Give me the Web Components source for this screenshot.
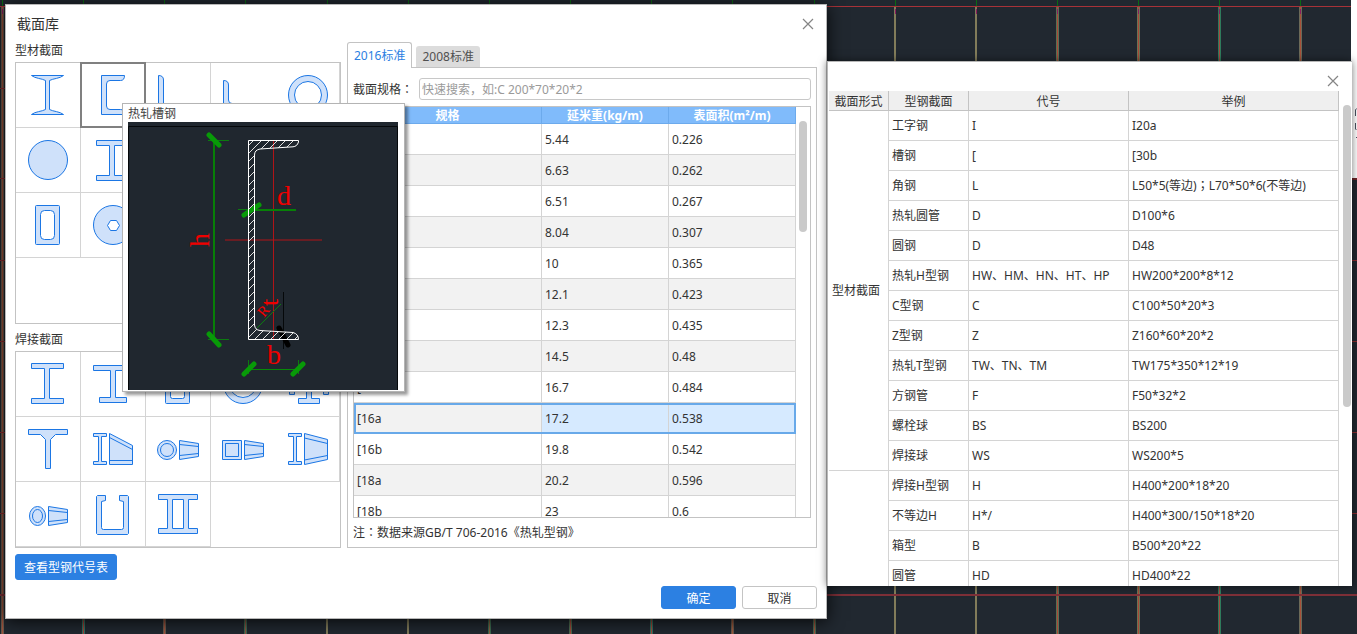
<!DOCTYPE html>
<html lang="zh-CN">
<head>
<meta charset="utf-8">
<meta name="viewport" content="width=device-width, initial-scale=1">
<title>截面库</title>
<style>
html, body { margin: 0; min-height: 100%; }
body {
  font: 12px/16px "Noto Sans", "Noto Sans CJK SC", sans-serif;
  color: #333;
  background: #212830;
}
</style>
</head>
<body>
<cad-desktop>
  <section-dialog></section-dialog>
  <code-window></code-window>
</cad-desktop>

<script>
function mount(el, html) {
  const t = document.createElement('template');
  t.innerHTML = html;
  el.attachShadow({ mode: 'open' }).append(t.content.cloneNode(true));
  return el.shadowRoot;
}

/* Drawing canvas behind the windows, with its axis lines */
customElements.define('cad-desktop', class extends HTMLElement {
  connectedCallback() {
    const palette = [
      ['#6b5a4c', '#a0503c'], ['#2e7060', '#a03c34'], ['#6b5a4c', '#a0503c'], ['#3c6a50', '#8a5040'],
      ['#827c5a', '#827c5a'], ['#827c5a', '#827c5a'], ['#3c6a50', '#8a6040'], ['#4c6a50', '#a04838'],
      ['#2e7060', '#a04838'], ['#6b5a4c', '#a0583c'], ['#4c6a50', '#a0503c'], ['#827c5a', '#827c5a'],
      ['#827c5a', '#827c5a'], ['#5a7054', '#a84838'], ['#6b7456', '#a84838'], ['#2e7a5c', '#a84840'],
      ['#6b6a58', '#a85038']
    ];
    let lines = '';
    for (let i = 0; i < 40; i++) {
      const x = Math.round(2 + 81.15 * i);
      const [side, core] = palette[i % palette.length];
      const w = side === core ? 2 : 3;
      lines += `<rect x="${x - 1}" y="7" width="${w}" height="100%" fill="${side}"/>
        <rect x="${x}" y="7" width="1" height="100%" fill="${core}"/>
        <rect x="${x}" y="0" width="1" height="6" fill="#0b6a14"/>
        <rect x="${x}" y="9" width="1" height="5" fill="#8a1c60"/>`;
    }
    for (const y of [88, 178, 260, 341, 432, 513]) lines += `<rect x="0" y="${y}" width="5" height="1" fill="#8a2c30"/><rect x="99%" y="${y}" width="1%" height="1" fill="#8a2c30"/>`;
    mount(this, `
      <style>
        :host { display: block; position: relative; min-height: 634px; overflow: hidden; background: #212830; }
        svg.canvas { position: absolute; inset: 0; width: 100%; height: 100%; }
        .edge { position: absolute; top: 0; right: 0; width: 6px; height: 178px; background: #fff; border-bottom: 2px solid #6a2428; }
        .edge svg { display: block; }
        .windows { position: relative; display: grid; grid-template-columns: minmax(0, 822fr) minmax(0, 525fr); align-items: start; padding: 4px 5px 15px; }
      </style>
      <svg class="canvas" aria-hidden="true">${lines}
        <rect x="0" y="6" width="100%" height="1" fill="#a83238"/>
        <rect x="0" y="594" width="100%" height="2" fill="#7e3038"/>
      </svg>
      <div class="edge"><svg width="6" height="150" aria-hidden="true"><path d="M4.5 116v-6l1-1.500M4.500 123v6l1 1M5 137.500h1" fill="none" stroke="#4a5060"/></svg></div>
      <div class="windows"><slot></slot></div>`);
  }
});

/* Small pictograms of steel sections */
const I = (l, r, t, b, w1, w2, f) =>
  `<path d="M${l} ${t}H${r}V${t + f}H${w2}V${b - f}H${r}V${b}H${l}V${b - f}H${w1}V${t + f}H${l}Z"/>`;
const ring = '<circle cx="32" cy="32" r="19.500"/><circle class="hole" cx="32" cy="32" r="13.500"/>';
const taper = (x, y) =>
  `<path d="M${x} ${y}l19 3v13l-19 3zM${x} ${y + 4}l19 2M${x} ${y + 15}l19 -2"/>`;
const ICONS = {
  beam: '<path d="M15.500 12.500H47.500C44 15.500 37 15.500 33.500 17.500V46.500C37 48.500 44 48.500 47.500 51.500H15.500C19 48.500 26 48.500 29.500 46.500V17.500C26 15.500 19 15.500 15.500 12.500Z"/>',
  channel: '<path d="M20.500 12.500H43.500Q43.500 17.500 39.500 17.500H29Q25.500 17.500 25.500 21V43Q25.500 46.500 29 46.500H39.500Q43.500 46.500 43.500 51.500H20.500Z"/>',
  angle: '<path d="M12.500 12.500Q17.500 12.500 17.500 17V43Q17.500 46.500 21 46.500H47Q51.500 46.500 51.500 51.500H12.500Z"/>',
  angle2: '<path d="M12.500 17.500Q17.500 17.500 17.500 22V37Q17.500 40.500 21 40.500H47Q51.500 40.500 51.500 45.500H12.500Z"/>',
  pipe: ring,
  round: '<circle cx="32" cy="32" r="19.500"/>',
  h: I(15.5, 47.5, 12.5, 52.5, 28.5, 33.5, 5),
  c: '<path d="M18.500 12.500H45.500V22.500H40.500V17.500H23.500V46.500H40.500V41.500H45.500V51.500H18.500Z"/>',
  z: '<path d="M12.500 12.500H34.500V46.500H51.500V51.500H29.500V17.500H12.500Z"/>',
  t: '<path d="M12.500 12.500H51.500V17.500H34.500V51.500H29.500V17.500H12.500Z"/>',
  tube: '<rect x="19.500" y="12.500" width="24" height="39" rx="1"/><rect class="hole" x="24.500" y="17.500" width="14" height="29" rx="4"/>',
  ball: '<circle cx="32" cy="32" r="19.500"/><path class="hole" d="M26.500 32.500L29.500 27.500H35.500L38.500 32.500L35.500 37.500H29.500Z"/>',
  wh: I(15.5, 47.5, 11.5, 51.5, 28.5, 33.5, 5),
  uh: '<path d="M12.500 13.500H51.500V18.500H34.500V45.500H45.500V50.500H18.500V45.500H29.500V18.500H12.500Z"/>',
  box: '<rect x="19.500" y="11.500" width="24" height="40" rx="1"/><rect class="hole" x="24.500" y="16.500" width="14" height="30" rx="2"/>',
  cross: '<path d="M22.500 12.500H43.500V17.500H35.500V29.500H47.500V21.500H52.500V42.500H47.500V34.500H35.500V46.500H43.500V51.500H22.500V46.500H30.500V34.500H18.500V42.500H13.500V21.500H18.500V29.500H30.500V17.500H22.500Z"/>',
  wt: '<path d="M12.500 12.500H51.500V17.500H39.500L34.500 22.500V51.500H29.500V22.500L24.500 17.500H12.500Z"/>',
  varh: I(12.5, 25.5, 16.5, 47.5, 17.5, 20.5, 3) + '<path d="M28.500 16.500L51.500 28.500V47.500H28.500ZM28.500 20.500L51.500 32.500M28.500 43.500H51.500"/>',
  varpipe: '<circle cx="21" cy="33" r="9.500"/><circle cx="21" cy="33" r="6.500"/>' + taper(33.5, 23.5),
  varbox: '<rect x="11.500" y="23.500" width="19" height="19"/><rect x="14.500" y="26.500" width="13" height="13"/>' + taper(33.5, 23.5),
  varh2: I(12.5, 25.5, 16.5, 47.5, 17.5, 20.5, 3) + '<path d="M28.500 16.500L51.500 22.500V42.500L28.500 47.500ZM28.500 21L51.500 26.500M28.500 43L51.500 38.500"/>',
  varell: '<ellipse cx="21.500" cy="34" rx="8" ry="9.500"/><ellipse cx="21.500" cy="34" rx="5" ry="6.500"/>' + taper(32.5, 24.5),
  open: '<path d="M16.500 13.500H24.500V18.500L20.500 19.500V45.500Q20.500 47.500 22.500 47.500H40.500Q42.500 47.500 42.500 45.500V19.500L38.500 18.500V13.500H46.500L47.500 14.500V51.500L46.500 52.500H16.500L15.500 51.500V14.500Z"/>',
  dbl: '<path d="M12.500 12.500H51.500V17.500H42.500V46.500H51.500V51.500H12.500V46.500H21.500V17.500H12.500ZM26.500 17.500V46.500H37.500V17.500Z"/>'
};
customElements.define('section-grid', class extends HTMLElement {
  connectedCallback() {
    const items = this.getAttribute('items').split(' ');
    const picked = this.getAttribute('selected');
    mount(this, `
      <style>
        :host { display: grid; grid-template-columns: repeat(4, 65px) 64px; grid-auto-rows: 65px; align-content: start;
                box-sizing: border-box; width: 326px; border: 1px solid #c3c3c3; }
        button { position: relative; box-sizing: border-box; padding: 0; background: none; border: 0 solid #d4d4d4; border-width: 0 1px 1px 0; }
        button:nth-child(5n) { border-right-width: 0; }
        button.on::after { content: ""; position: absolute; inset: -1px; border: 2px solid #808080; }
        svg { display: block; width: 64px; height: 64px; fill: #cfe1fa; fill-rule: evenodd; stroke: #1b76e4; stroke-linejoin: round; }
        .hole { fill: #fff; }
      </style>
      ${items.map(n => `<button type="button" aria-label="${n}" class="${n === picked ? 'on' : ''}"><svg viewBox="0 0 64 64">${ICONS[n]}</svg></button>`).join('')}`);
  }
});

customElements.define('close-button', class extends HTMLElement {
  connectedCallback() {
    mount(this, `
      <style>
        :host { display: block; }
        button { display: block; padding: 0; border: 0; background: none; }
        svg { display: block; }
      </style>
      <button type="button" aria-label="关闭"><svg width="12" height="12"><path d="M1 1L11 11M11 1L1 11" stroke="#858585" stroke-width="1.200"/></svg></button>`);
  }
});

customElements.define('push-button', class extends HTMLElement {
  connectedCallback() {
    mount(this, `
      <style>
        :host { display: block; }
        button { display: block; box-sizing: border-box; width: 100%; height: var(--h, 23px); padding: 2px 8px 0; font: inherit; color: #333;
                 background: #fff; border: 1px solid #c4c4c4; border-radius: 3px; }
        :host([primary]) button { color: #fff; background: #2c80e2; border-color: #2c80e2; }
      </style>
      <button type="button"><slot></slot></button>`);
  }
});

/* Weight and area of each profile size */
customElements.define('spec-table', class extends HTMLElement {
  connectedCallback() {
    const rows = [
      ['[5', '5.44', '0.226'], ['[6.3', '6.63', '0.262'], ['[6.5', '6.51', '0.267'], ['[8', '8.04', '0.307'],
      ['[10', '10', '0.365'], ['[12', '12.1', '0.423'], ['[12.6', '12.3', '0.435'], ['[14a', '14.5', '0.48'],
      ['[14b', '16.7', '0.484'], ['[16a', '17.2', '0.538'], ['[16b', '19.8', '0.542'], ['[18a', '20.2', '0.596'],
      ['[18b', '23', '0.6']
    ];
    mount(this, `
      <style>
        :host { display: flex; box-sizing: border-box; height: 412px; overflow: hidden; border: 1px solid #c3c3c3; }
        .view { flex: 1; min-width: 0; }
        table { width: 100%; table-layout: fixed; border-spacing: 0; }
        th, td { box-sizing: border-box; }
        th { height: 17px; padding: 2px 0 0; color: #fff; font-weight: 700; line-height: 14px; background: #80bbfb; border: 0 solid #6caaec; border-width: 0 1px 1px 0; }
        td { height: 31px; padding: 2px 3px 0; border: 0 solid #d4d4d4; border-width: 0 1px 1px 0; }
        tr:nth-child(even) td { background: #f2f2f2; }
        tr.on { outline: 2px solid #68a9e9; outline-offset: -2px; }
        tr.on td + td { background: #d6eaff; }
        .n { width: 127px; }
        .bar { width: 14px; }
        .bar i { display: block; width: 8px; height: 111px; margin: 14px auto 0; border-radius: 4px; background: #cacaca; }
      </style>
      <div class="view"><table>
        <thead><tr><th>规格</th><th class="n">延米重(kg/m)</th><th class="n">表面积(m²/m)</th></tr></thead>
        <tbody>${rows.map(r => `<tr class="${r[0] === '[16a' ? 'on' : ''}">${r.map(c => `<td>${c}</td>`).join('')}</tr>`).join('')}</tbody>
      </table></div>
      <div class="bar"><i></i></div>`);
  }
});

/* Preview of the hovered section */
customElements.define('section-preview', class extends HTMLElement {
  connectedCallback() {
    const outline = 'M120.500 18.500H170.500V20Q169 24.500 165 24.800L132 27Q126.500 28 126.500 33V203Q127 208 132 208.500L165 210.500Q170.500 212 170.500 217.500H120.500Z';
    mount(this, `
      <style>
        :host { display: block; box-sizing: border-box; width: 283px; padding: 2px 6px 1px 5px; color: #444; background: #fff;
                border: 1px solid #b4b4b4; box-shadow: 3px 3px 3px rgba(0,0,0,.4); }
        svg { display: block; background: #20272f; font-family: "Liberation Serif", serif; }
        text { fill: #f00000; }
        .tick { stroke: #089a08; stroke-width: 5; stroke-linecap: round; }
      </style>
      <slot></slot>
      <svg width="270" height="268" fill="none">
        <defs><pattern id="hatch" width="8" height="8" patternUnits="userSpaceOnUse"><path d="M-2 10L10 -2M-2 2L2 -2M6 10L10 6" stroke="#e0e0e0"/></pattern></defs>
        <path d="M0.500 268V4.500H269.500V268" stroke="#05080a"/>
        <path d="M97 118H194M145.500 18V217" stroke="#b01418"/>
        <path d="M80 18.500H101M80 217.500H101M110 87.500H168M120.500 238V252M170.500 238V252M129 206L153 182" stroke="#0c7a10"/>
        <path d="M120 247.500H171" stroke="#078a07"/>
        <path d="M86 18V217M127 88H168" stroke="#078007" stroke-width="2"/>
        <path class="tick" d="M81 13L91 23M81 212L91 223M116 93L131 83M116 252L126 242M165 252L175 242"/>
        <path d="M155.500 170V227" stroke="#05080a"/>
        <path d="M151 206L160 223" stroke="#000" stroke-width="5" stroke-linecap="round"/>
        <path d="${outline}" fill="url(#hatch)" stroke="#fff"/>
        <text x="149" y="83" font-size="28">d</text>
        <text x="139" y="242" font-size="28">b</text>
        <text transform="translate(81 125) rotate(-90)" font-size="28">h</text>
        <text transform="translate(150 184) rotate(-90)" font-size="26">t</text>
        <text transform="translate(136 196) rotate(-50)" font-size="15">R</text>
      </svg>`);
  }
});

customElements.define('section-dialog', class extends HTMLElement {
  connectedCallback() {
    mount(this, `
      <style>
        :host { display: block; position: relative; min-width: 0; box-sizing: border-box; padding: 0 9px 9px;
                background: #fff; border: 1px solid #b8b8b8; box-shadow: 0 2px 16px rgba(0,0,0,.85); }
        header { display: flex; align-items: center; justify-content: space-between; height: 37px; padding: 0 3px 0 2px; }
        h1 { margin: 0; font-size: 14px; font-weight: 400; line-height: 20px; }
        h2 { margin: 0 0 2px; font-size: 12px; font-weight: 400; line-height: 18px; }
        main { display: flex; align-items: flex-start; gap: 6px; }
        .shapes { flex: none; }
        .rolled { min-height: 262px; margin-bottom: 7px; }
        .welded { min-height: 197px; }
        .specs { flex: 1; min-width: 0; }
        .tabs { display: flex; align-items: flex-end; gap: 4px; height: 26px; margin-bottom: -1px; position: relative; }
        .tabs button { height: 21px; margin: 0 0 1px; padding: 0 6px; border: 0; border-radius: 3px 3px 0 0; font: inherit; color: #505050; background: #dcdcdc; }
        .tabs button.on { height: 26px; margin: 0; padding-top: 1px; color: #2c80e2; background: #fff; border: 1px solid #c3c3c3; border-bottom: 0; }
        .panel { padding: 10px 5px 6px; border: 1px solid #c3c3c3; }
        .search { display: flex; align-items: center; margin-bottom: 6px; }
        .search label { width: 66px; padding-top: 1px; }
        .mid { font-family: "Noto Sans CJK TC", sans-serif; line-height: 0; }
        input { flex: 1; min-width: 0; box-sizing: border-box; height: 22px; padding: 1px 2px 0; font: inherit; color: #333; border: 1px solid #c8c8c8; border-radius: 3px; }
        input::placeholder { color: #9a9a9a; }
        p { height: 17px; margin: 6px 0 0; line-height: 17px; }
        .lookup { --h: 26px; width: 102px; margin-top: 6px; }
        footer { display: flex; justify-content: flex-end; gap: 6px; margin-top: 6px; }
        footer push-button { width: 75px; }
        section-preview { position: absolute; left: 116px; top: 98px; }
      </style>
      <header><h1>截面库</h1><close-button></close-button></header>
      <main>
        <div class="shapes">
          <h2>型材截面</h2>
          <section-grid class="rolled" selected="channel" items="beam channel angle angle2 pipe round h c z t tube ball"></section-grid>
          <h2>焊接截面</h2>
          <section-grid class="welded" items="wh uh box pipe cross wt varh varpipe varbox varh2 varell open dbl"></section-grid>
        </div>
        <div class="specs">
          <div class="tabs" role="tablist"><button type="button" role="tab" class="on">2016标准</button><button type="button" role="tab">2008标准</button></div>
          <div class="panel">
            <div class="search"><label for="q">截面规格<span class="mid" lang="zh-TW">：</span></label><input id="q" type="text" placeholder="快速搜索，如:C 200*70*20*2"></div>
            <spec-table></spec-table>
            <p>注<span class="mid" lang="zh-TW">：</span>数据来源GB/T 706-2016《热轧型钢》</p>
          </div>
        </div>
      </main>
      <push-button primary class="lookup">查看型钢代号表</push-button>
      <footer><push-button primary>确定</push-button><push-button>取消</push-button></footer>
      <section-preview>热轧槽钢</section-preview>`);
  }
});

/* Reference list of section codes */
customElements.define('code-window', class extends HTMLElement {
  connectedCallback() {
    const rows = [
      ['工字钢', 'I', 'I20a'], ['槽钢', '[', '[30b'], ['角钢', 'L', 'L50*5(等边)<span class="mid" lang="zh-TW">；</span>L70*50*6(不等边)'],
      ['热轧圆管', 'D', 'D100*6'], ['圆钢', 'D', 'D48'], ['热轧H型钢', 'HW、HM、HN、HT、HP', 'HW200*200*8*12'],
      ['C型钢', 'C', 'C100*50*20*3'], ['Z型钢', 'Z', 'Z160*60*20*2'], ['热轧T型钢', 'TW、TN、TM', 'TW175*350*12*19'],
      ['方钢管', 'F', 'F50*32*2'], ['螺栓球', 'BS', 'BS200'], ['焊接球', 'WS', 'WS200*5'],
      ['焊接H型钢', 'H', 'H400*200*18*20'], ['不等边H', 'H*/', 'H400*300/150*18*20'], ['箱型', 'B', 'B500*20*22'],
      ['圆管', 'HD', 'HD400*22']
    ];
    const group = i => i === 0 ? '<td rowspan="12">型材截面</td>' : i === 12 ? '<td rowspan="4"></td>' : '';
    mount(this, `
      <style>
        :host { display: block; position: relative; min-width: 0; box-sizing: border-box; height: 525px; margin-top: 57px; overflow: hidden;
                background: #fff; border: 1px solid #b8b8b8; border-width: 1px 0 0 1px; box-shadow: 0 0 8px rgba(0,0,0,.55); }
        header { display: flex; align-items: center; justify-content: flex-end; height: 29px; padding: 8px 13px 0 0; box-sizing: border-box; }
        .view { display: flex; padding-left: 1px; }
        table { flex: 1; table-layout: fixed; border-spacing: 0; }
        th, td { box-sizing: border-box; border: 0 solid #d4d4d4; border-width: 0 1px 1px 0; }
        th { height: 20px; padding: 2px 0 0; font-weight: 400; background: #efefef; border-color: #c3c3c3; }
        td { height: 30px; padding: 0 3px; white-space: nowrap; }
        .mid { font-family: "Noto Sans CJK TC", sans-serif; line-height: 0; }
        .a { width: 60px; } .b { width: 80px; } .c { width: 160px; }
        .bar { width: 13px; }
        .bar i { display: block; width: 8px; height: 302px; margin: 14px 0 0 4px; border-radius: 4px; background: #cacaca; }
      </style>
      <header><close-button></close-button></header>
      <div class="view"><table>
        <thead><tr><th class="a">截面形式</th><th class="b">型钢截面</th><th class="c">代号</th><th>举例</th></tr></thead>
        <tbody>${rows.map((r, i) => `<tr>${group(i)}${r.map(c => `<td>${c}</td>`).join('')}</tr>`).join('')}</tbody>
      </table><div class="bar"><i></i></div></div>`);
  }
});
</script>
</body>
</html>
